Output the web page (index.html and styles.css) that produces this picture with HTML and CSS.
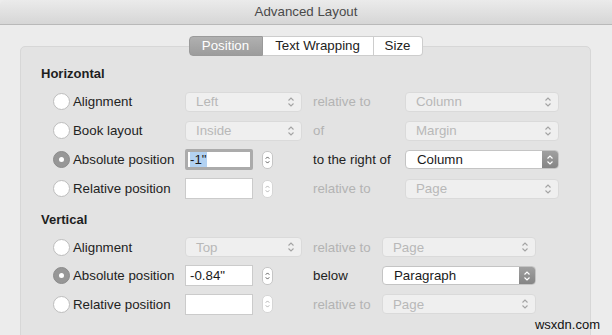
FILE: index.html
```html
<!DOCTYPE html>
<html lang="en">
<head>
  <meta charset="UTF-8" />
  <meta name="viewport" content="width=device-width, initial-scale=1.0" />
  <title>Advanced Layout</title>
  <link rel="stylesheet" href="styles.css">
</head>
<body>
  <div class="window">
    <div class="titlebar">Advanced Layout</div>

    <div class="tabs">
      <span class="tab selected">Position</span>
      <span class="tab">Text Wrapping</span>
      <span class="tab">Size</span>
    </div>

    <div class="panel">
      <!-- Horizontal -->
      <h3>Horizontal</h3>
      <div class="grid horiz">
        <label class="radio"><span class="dot"></span>Alignment</label>
        <div class="select disabled"><span>Left</span><svg viewBox="0 0 8 12"><path d="M1.5 4.5L4 2l2.5 2.5M1.5 7.5L4 10l2.5-2.5"/></svg></div>
        <span class="rel disabled">relative to</span>
        <div class="select disabled"><span>Column</span><svg viewBox="0 0 8 12"><path d="M1.5 4.5L4 2l2.5 2.5M1.5 7.5L4 10l2.5-2.5"/></svg></div>

        <label class="radio"><span class="dot"></span>Book layout</label>
        <div class="select disabled"><span>Inside</span><svg viewBox="0 0 8 12"><path d="M1.5 4.5L4 2l2.5 2.5M1.5 7.5L4 10l2.5-2.5"/></svg></div>
        <span class="rel disabled">of</span>
        <div class="select disabled"><span>Margin</span><svg viewBox="0 0 8 12"><path d="M1.5 4.5L4 2l2.5 2.5M1.5 7.5L4 10l2.5-2.5"/></svg></div>

        <label class="radio"><span class="dot on"></span>Absolute position</label>
        <div class="field">
          <span class="input focus"><span class="sel">-1"</span></span>
          <span class="stepper"><svg viewBox="0 0 8 12"><path d="M2 4.5L4 2.5l2 2M2 7.5L4 9.5l2-2"/></svg></span>
        </div>
        <span class="rel">to the right of</span>
        <div class="select active"><span>Column</span><span class="arrowbox"><svg viewBox="0 0 8 12"><path d="M1.5 4.5L4 2l2.5 2.5M1.5 7.5L4 10l2.5-2.5"/></svg></span></div>

        <label class="radio"><span class="dot"></span>Relative position</label>
        <div class="field">
          <span class="input"></span>
          <span class="stepper faded"><svg viewBox="0 0 8 12"><path d="M2 4.5L4 2.5l2 2M2 7.5L4 9.5l2-2"/></svg></span>
        </div>
        <span class="rel disabled">relative to</span>
        <div class="select disabled"><span>Page</span><svg viewBox="0 0 8 12"><path d="M1.5 4.5L4 2l2.5 2.5M1.5 7.5L4 10l2.5-2.5"/></svg></div>
      </div>

      <!-- Vertical -->
      <h3 class="second">Vertical</h3>
      <div class="grid vert">
        <label class="radio"><span class="dot"></span>Alignment</label>
        <div class="select disabled"><span>Top</span><svg viewBox="0 0 8 12"><path d="M1.5 4.5L4 2l2.5 2.5M1.5 7.5L4 10l2.5-2.5"/></svg></div>
        <span class="rel disabled">relative to</span>
        <div class="select disabled"><span>Page</span><svg viewBox="0 0 8 12"><path d="M1.5 4.5L4 2l2.5 2.5M1.5 7.5L4 10l2.5-2.5"/></svg></div>

        <label class="radio"><span class="dot on"></span>Absolute position</label>
        <div class="field">
          <span class="input">-0.84"</span>
          <span class="stepper"><svg viewBox="0 0 8 12"><path d="M2 4.5L4 2.5l2 2M2 7.5L4 9.5l2-2"/></svg></span>
        </div>
        <span class="rel">below</span>
        <div class="select active"><span>Paragraph</span><span class="arrowbox"><svg viewBox="0 0 8 12"><path d="M1.5 4.5L4 2l2.5 2.5M1.5 7.5L4 10l2.5-2.5"/></svg></span></div>

        <label class="radio"><span class="dot"></span>Relative position</label>
        <div class="field">
          <span class="input"></span>
          <span class="stepper faded"><svg viewBox="0 0 8 12"><path d="M2 4.5L4 2.5l2 2M2 7.5L4 9.5l2-2"/></svg></span>
        </div>
        <span class="rel disabled">relative to</span>
        <div class="select disabled"><span>Page</span><svg viewBox="0 0 8 12"><path d="M1.5 4.5L4 2l2.5 2.5M1.5 7.5L4 10l2.5-2.5"/></svg></div>
      </div>
    </div>

    <div class="watermark">wsxdn.com</div>
  </div>
</body>
</html>
```

FILE: styles.css
```css
body {
  margin: 0;
  background-color: #ececec;
  font-family: "Liberation Sans", Arial, sans-serif;
  font-size: 13.3px;
  color: #222;
}
.window {
  position: relative;
  height: 335px;
  overflow: hidden;
}
.titlebar {
  height: 24px;
  line-height: 24px;
  text-align: center;
  color: #4a4a4a;
  background: linear-gradient(#ebebeb, #d6d6d6);
  border-bottom: 1px solid #b9b9b9;
  border-radius: 5px 5px 0 0;
}
.tabs {
  position: relative;
  z-index: 1;
  display: flex;
  justify-content: center;
  margin-top: 11px;
  margin-left: -1px;
}
.tab {
  height: 18px;
  line-height: 18px;
  padding: 0 10px;
  background: #fff;
  border: 1px solid #cdcdcd;
  border-left: none;
  color: #222;
}
.tab:first-child {
  border-left: 1px solid #a5a5a5;
  border-radius: 4px 0 0 4px;
}
.tab:last-child {
  border-radius: 0 4px 4px 0;
}
.tab.selected {
  background: linear-gradient(#b0b0b0, #9c9c9c);
  border-color: #9a9a9a;
  color: #fff;
  width: 52px;
  text-align: center;
}
.tab:nth-child(2) { width: 90px; text-align: center; }
.tab:nth-child(3) { width: 28px; text-align: center; }
.panel {
  margin: -10px 21px 0 20px;
  height: 320px;
  padding: 19px 0 0 20px;
  background: #e3e3e3;
  border: 1px solid #d7d7d7;
  border-radius: 5px;
}
h3 {
  margin: 0;
  font-size: 13px;
  line-height: 16px;
  font-weight: bold;
  color: #1e1e1e;
}
h3.second {
  margin-top: 9px;
}
.grid {
  display: grid;
  align-items: center;
  margin-top: 5px;
  padding-left: 12px;
}
.horiz {
  grid-template-columns: 132px 117px 103px 154px;
  grid-auto-rows: 29px;
}
.vert {
  grid-template-columns: 132px 117px 80px 154px;
  grid-auto-rows: 28.5px;
  margin-top: 5px;
}
.rel {
  margin-left: 11px;
  white-space: nowrap;
}
.rel.disabled {
  color: #b3b3b3;
}
.radio {
  display: flex;
  align-items: center;
  gap: 3px;
  white-space: nowrap;
}
.dot {
  width: 15px;
  height: 15px;
  border: 1px solid #bdbdbd;
  border-radius: 50%;
  background: #fff;
  display: flex;
  align-items: center;
  justify-content: center;
}
.dot.on {
  background: #979797;
  border-color: #8c8c8c;
}
.dot.on::after {
  content: "";
  width: 5px;
  height: 5px;
  border-radius: 50%;
  background: #fff;
}
.select {
  display: flex;
  align-items: center;
  justify-content: space-between;
  height: 19px;
  border-radius: 4px;
  padding-left: 10px;
  box-sizing: border-box;
}
.select svg {
  width: 8px;
  height: 12px;
  margin-right: 6px;
  fill: none;
  stroke: #a3a3a3;
  stroke-width: 1.1;
}
.select.disabled {
  height: 20px;
  background: #efefef;
  border: 1px solid #dadada;
  color: #b8b8b8;
}
.select.active {
  background: #fff;
  border: 1px solid #c4c4c4;
  color: #1a1a1a;
  overflow: hidden;
  padding-left: 11px;
}
.arrowbox {
  width: 16px;
  height: 100%;
  display: flex;
  align-items: center;
  justify-content: center;
  background: linear-gradient(#a0a0a0, #858585);
}
.arrowbox svg {
  margin: 0;
  stroke: #fff;
  stroke-width: 1.2;
}
.field {
  display: flex;
  align-items: center;
  gap: 9px;
}
.input {
  width: 68px;
  height: 21px;
  box-sizing: border-box;
  background: #fff;
  border: 1px solid #cbcbcb;
  line-height: 19px;
  padding-left: 4px;
  color: #1a1a1a;
}
.input.focus {
  border: 3px solid #ababab;
  border-radius: 2px;
  line-height: 15px;
  padding-left: 2px;
}
.sel {
  background: #b3d2f2;
  display: inline-block;
  height: 15px;
}
.stepper {
  width: 11px;
  height: 18px;
  box-sizing: border-box;
  border: 1px solid #c6c6c6;
  border-radius: 5px;
  background: #fff;
  display: flex;
  align-items: center;
  justify-content: center;
}
.stepper svg {
  width: 7px;
  height: 12px;
  fill: none;
  stroke: #555;
  stroke-width: 1.1;
}
.stepper.faded {
  border-color: #d6d6d6;
}
.stepper.faded svg {
  stroke: #b0b0b0;
}
.watermark {
  position: absolute;
  right: 12px;
  bottom: 3px;
  font-family: "Liberation Sans", Arial, sans-serif;
  font-size: 13px;
  color: #111;
}
```
